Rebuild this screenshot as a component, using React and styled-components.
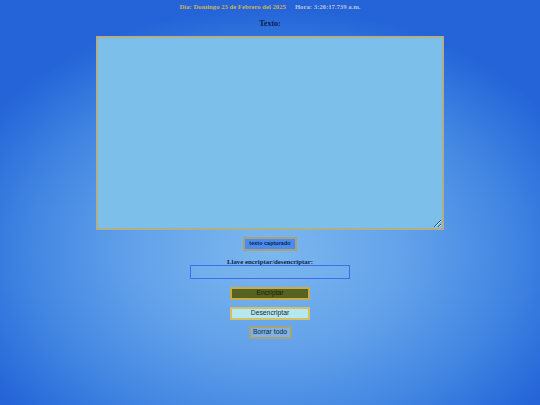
import React from "react";
import styled, { createGlobalStyle } from "styled-components";

const Global = createGlobalStyle`
  html, body { margin: 0; padding: 0; }
  body {
    min-height: 405px;
    background: radial-gradient(ellipse 62% 60% at 50% 62%, #7cb8ee 0%, #63a2ea 40%, #4286e2 72%, #2c6edb 92%, #2464d8 100%);
    background-color: #2464d8;
    font-family: "Liberation Serif", "Times New Roman", serif;
  }
`;

const Page = styled.div`
  display: flex;
  flex-direction: column;
  align-items: center;
  padding-top: 3px;
  min-height: 405px;
  box-sizing: border-box;
`;

const DateLine = styled.div`
  display: flex;
  gap: 9px;
  font-size: 6.7px;
  font-weight: bold;
  line-height: 8px;
`;

const DateText = styled.span`
  color: ${(p) => p.$color};
`;

const Title = styled.div`
  margin-top: 8px;
  font-size: 8px;
  font-weight: bold;
  color: #0d1f4a;
  line-height: 9px;
`;

const TextArea = styled.textarea`
  display: block;
  margin-top: 8px;
  width: 348px;
  height: 194px;
  box-sizing: border-box;
  background: #7cbfea;
  border: 2px solid #b2ae86;
  outline: none;
  resize: both;
  padding: 2px;
  font-family: "Liberation Sans", Arial, sans-serif;
  font-size: 7px;
`;

const Button = styled.button`
  box-sizing: border-box;
  width: ${(p) => p.$w}px;
  height: ${(p) => p.$h}px;
  background: ${(p) => p.$bg};
  border: 2px solid ${(p) => p.$border};
  color: ${(p) => p.$color || "#111"};
  font-family: "Liberation Sans", Arial, sans-serif;
  font-size: ${(p) => p.$fs || 6.8}px;
  font-weight: ${(p) => (p.$bold ? "bold" : "normal")};
  padding: 0;
  margin-top: ${(p) => p.$mt}px;
  cursor: pointer;
  line-height: 1;
`;

const Label = styled.div`
  margin-top: 7px;
  font-size: 6.8px;
  font-weight: bold;
  color: #0d1f4a;
  line-height: 7px;
`;

const KeyInput = styled.input`
  box-sizing: border-box;
  width: 160px;
  height: 14px;
  margin-top: 0;
  background: rgba(120, 180, 240, 0.35);
  border: 1px solid #3a6fe6;
  outline: none;
  padding: 0 2px;
  font-size: 7px;
`;

export default function App() {
  return (
    <>
      <Global />
      <Page>
        <DateLine>
          <DateText $color="#c9b25e">Día: Domingo 23 de Febrero del 2025</DateText>
          <DateText $color="#b9c5d9">Hora: 3:20:17.739 a.m.</DateText>
        </DateLine>
        <Title>Texto:</Title>
        <TextArea />
        <Button $w={54} $h={14} $bg="#4c8cf0" $border="#a5a27e" $bold $fs={5.5} $color="#0d1f4a" $mt={7}>
          texto capturado
        </Button>
        <Label>Llave encriptar/desencriptar:</Label>
        <KeyInput />
        <Button $w={80} $h={13} $bg="#56621f" $border="#c9a94a" $color="#1a1f10" $mt={8}>
          Encriptar
        </Button>
        <Button $w={80} $h={13} $bg="#b6e8f0" $border="#d6c063" $color="#1a2a3a" $mt={7}>
          Desencriptar
        </Button>
        <Button $w={43} $h={13} $bg="#82b2e2" $border="#a5a27e" $color="#0d1f4a" $mt={6}>
          Borrar todo
        </Button>
      </Page>
    </>
  );
}
